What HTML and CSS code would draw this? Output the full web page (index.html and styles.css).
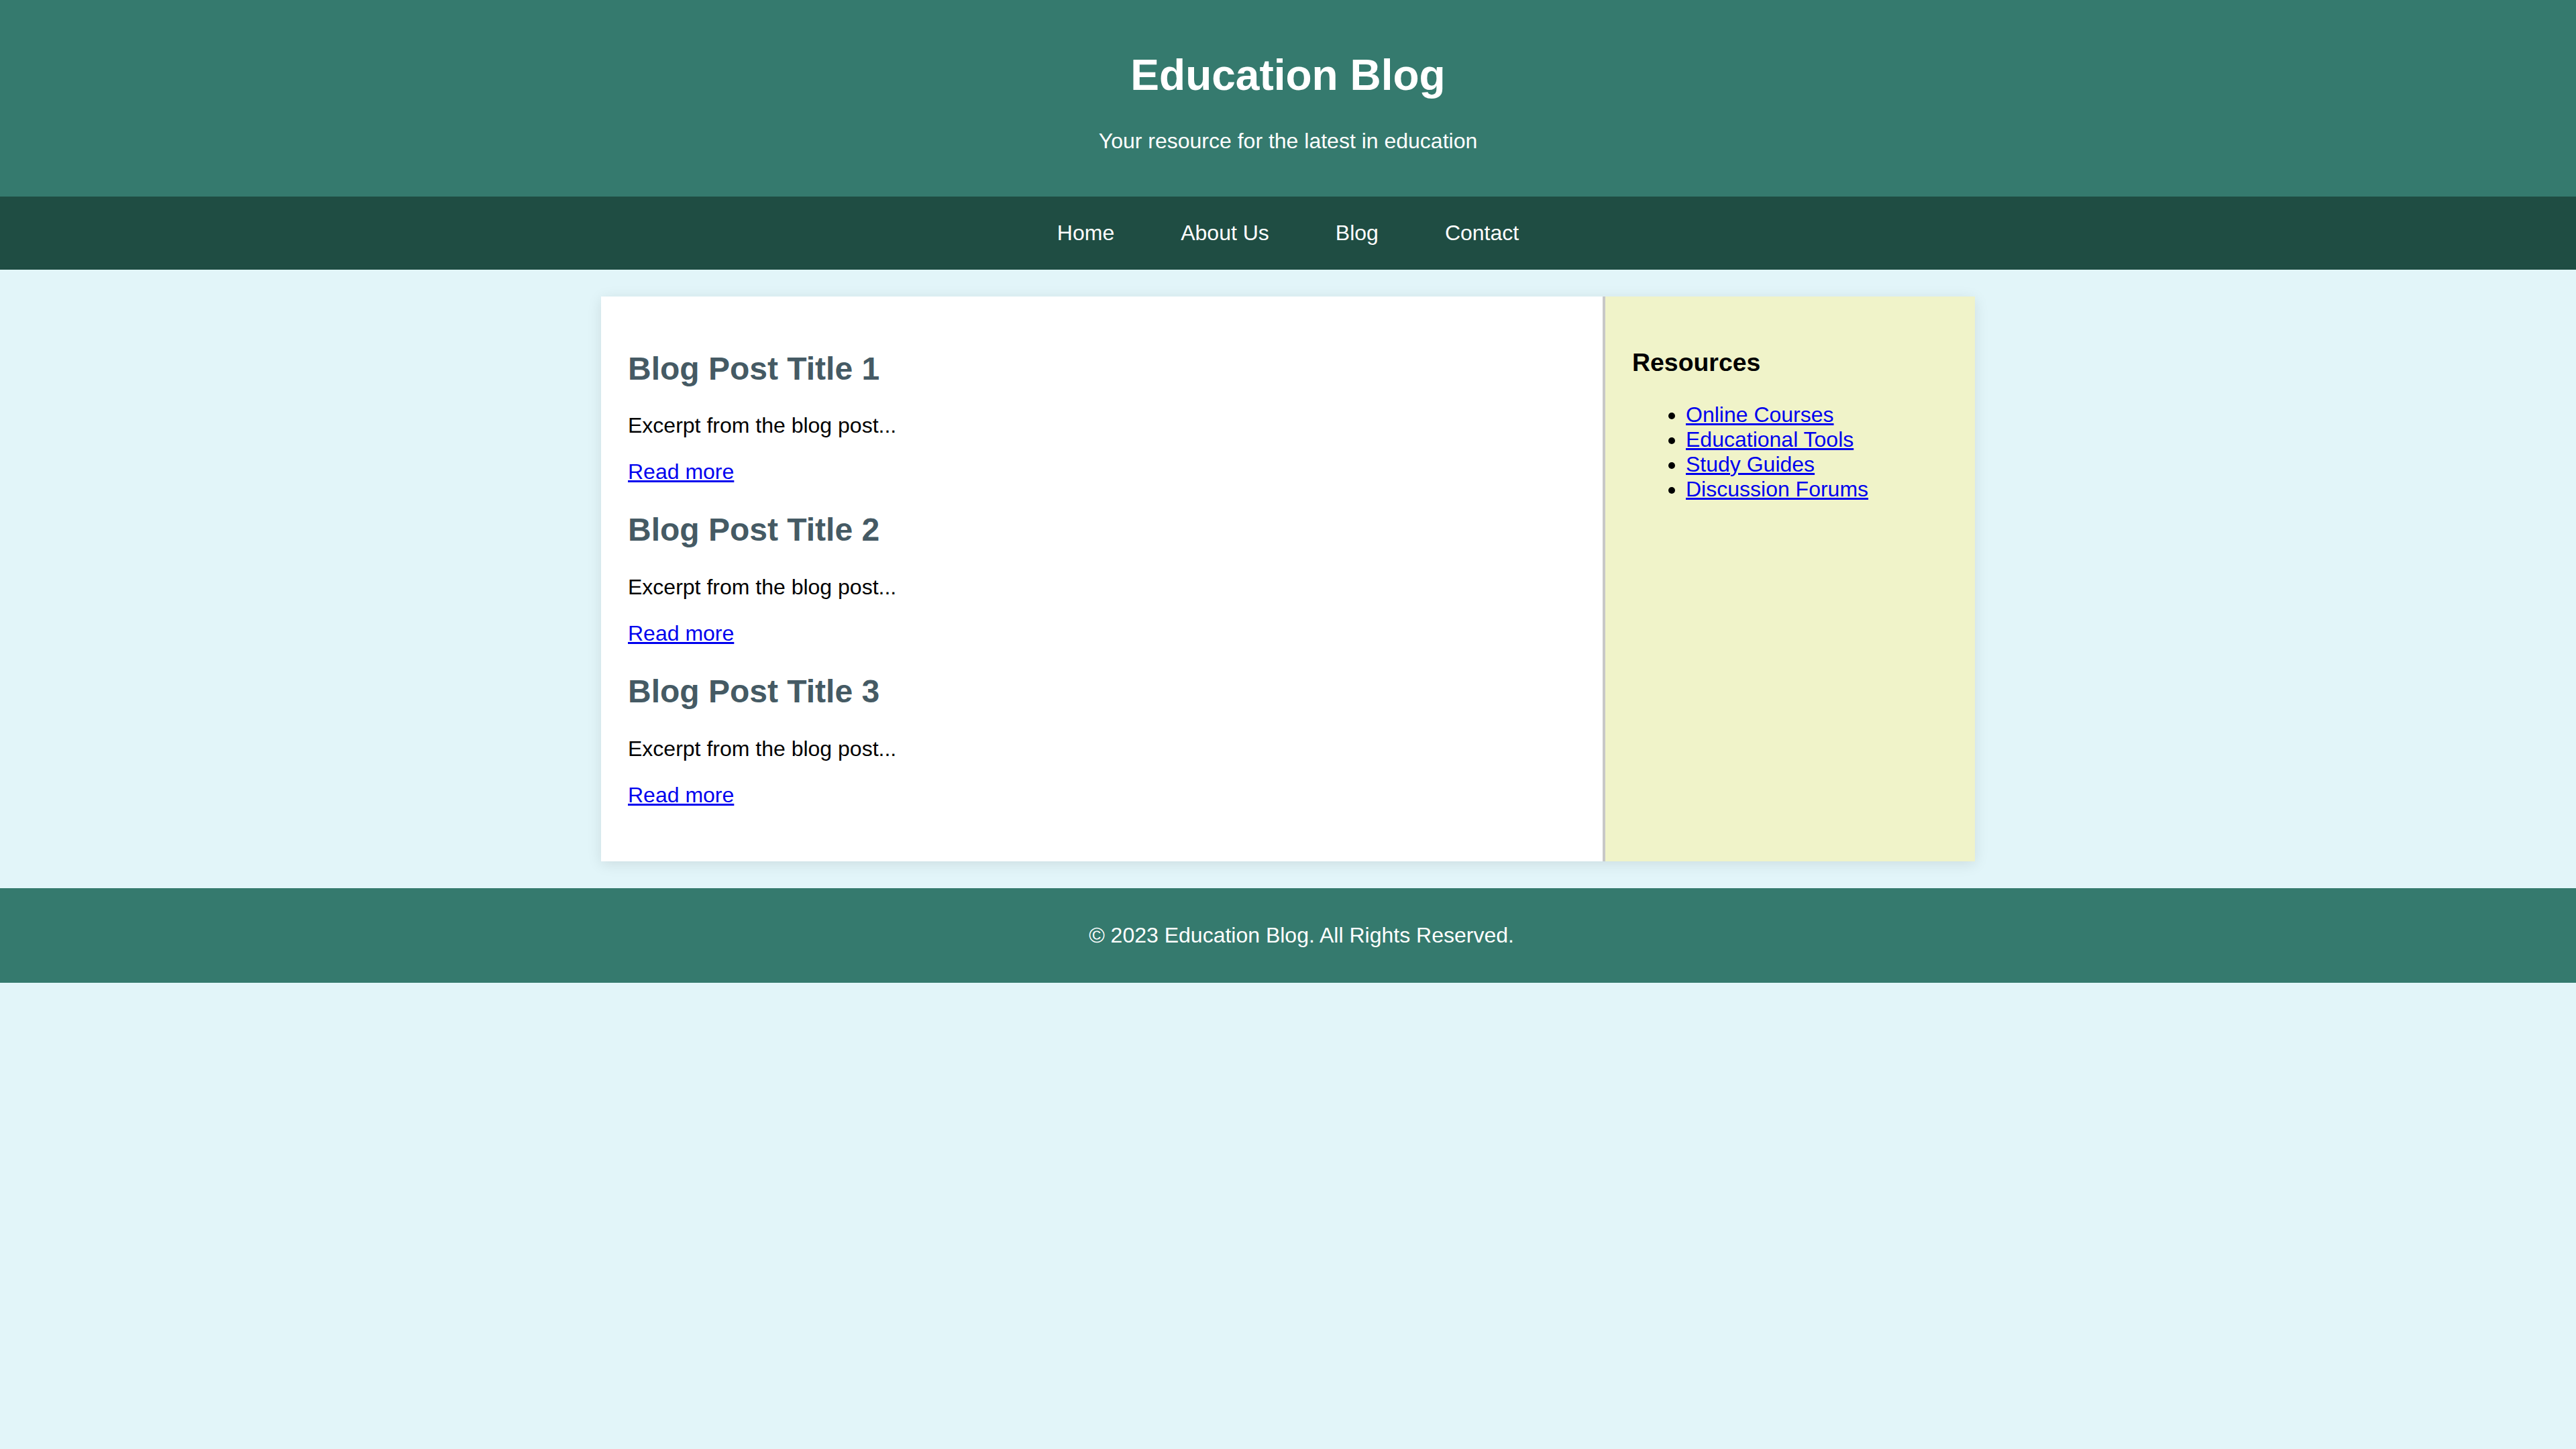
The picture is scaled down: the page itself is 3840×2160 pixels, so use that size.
FILE: index.html
```html
<!DOCTYPE html>
<html lang="en">
<head>
<meta charset="utf-8">
<title>Education Blog</title>
<link rel="stylesheet" href="styles.css">
</head>
<body>
<header class="site-header">
  <h1 class="site-title">Education Blog</h1>
  <p class="site-tagline">Your resource for the latest in education</p>
</header>
<nav class="site-nav">
  <ul class="nav-list">
    <li><a href="#">Home</a></li>
    <li><a href="#">About Us</a></li>
    <li><a href="#">Blog</a></li>
    <li><a href="#">Contact</a></li>
  </ul>
</nav>
<div class="container">
  <main class="posts">
    <article class="post">
      <h2 class="post-title">Blog Post Title 1</h2>
      <p>Excerpt from the blog post...</p>
      <p><a href="#">Read more</a></p>
    </article>
    <article class="post">
      <h2 class="post-title">Blog Post Title 2</h2>
      <p>Excerpt from the blog post...</p>
      <p><a href="#">Read more</a></p>
    </article>
    <article class="post">
      <h2 class="post-title">Blog Post Title 3</h2>
      <p>Excerpt from the blog post...</p>
      <p><a href="#">Read more</a></p>
    </article>
  </main>
  <aside class="sidebar">
    <h3 class="sidebar-title">Resources</h3>
    <ul class="resource-list">
      <li><a href="#">Online Courses</a></li>
      <li><a href="#">Educational Tools</a></li>
      <li><a href="#">Study Guides</a></li>
      <li><a href="#">Discussion Forums</a></li>
    </ul>
  </aside>
</div>
<footer class="site-footer">
  <p>&copy; 2023 Education Blog. All Rights Reserved.</p>
</footer>
</body>
</html>
```

FILE: styles.css
```css
html, body {
  margin: 0;
  padding: 0;
}

body {
  font-family: "Liberation Sans", Arial, sans-serif;
  font-size: 32px;
  line-height: normal;
  background: #e2f5f9;
  color: #000;
}

.site-header {
  background: #357a6e;
  color: #fff;
  text-align: center;
  padding: 32px;
}

.site-title {
  font-size: 64px;
  font-weight: bold;
  margin: 42.88px 0;
}

.site-tagline {
  font-size: 32px;
  margin: 32px 0;
}

.site-nav {
  background: #1f4d43;
  padding: 36px 0;
}

.nav-list {
  list-style: none;
  margin: 0;
  padding: 0;
  display: flex;
  justify-content: center;
  gap: 99px;
  line-height: 37px;
}

.nav-list a {
  color: #fff;
  text-decoration: none;
}

.container {
  width: 2048px;
  margin: 40px auto;
  display: flex;
  box-shadow: 0 4px 20px rgba(0, 0, 0, 0.1);
}

.posts {
  flex: 3;
  background: #fff;
  padding: 40px;
}

.post {
  margin-bottom: 40px;
}

.post p {
  margin: 32px 0;
}

.post-title {
  font-size: 48px;
  font-weight: bold;
  color: #455a64;
  margin: 39.84px 0;
}

.sidebar {
  flex: 1;
  background: #f0f3c9;
  padding: 40px;
  border-left: 4px solid #c8c8c8;
}

.sidebar-title {
  font-size: 37.44px;
  font-weight: bold;
  margin: 37.44px 0;
}

.resource-list {
  margin: 32px 0;
  padding-left: 80px;
}

a {
  color: #0000ee;
}

.site-footer {
  background: #357a6e;
  color: #fff;
  text-align: center;
  padding: 20px 0 20px 40px;
}

.site-footer p {
  margin: 32px 0;
}
```
